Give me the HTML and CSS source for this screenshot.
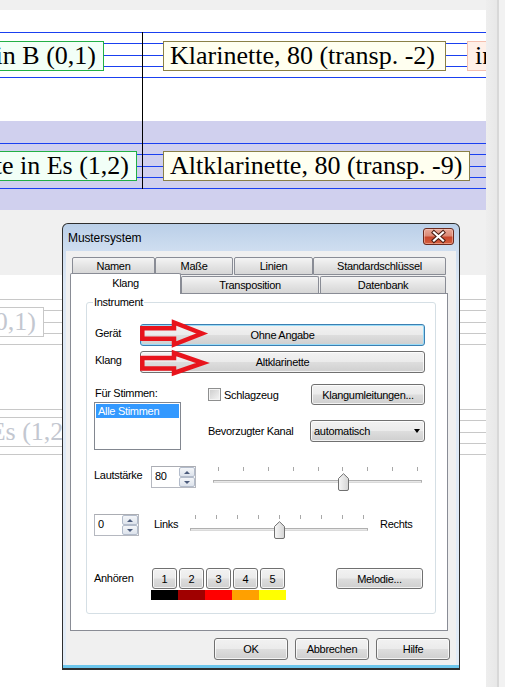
FILE: index.html
```
<!DOCTYPE html>
<html lang="de">
<head>
<meta charset="utf-8">
<title>Mustersystem</title>
<link rel="stylesheet" href="styles.css">
</head>
<body>
<div class="screen">
  <div class="main">
    <div class="topband"></div>
    <div class="score">
      <div class="area a1">
        <div class="staff first">
          <div class="nbox green r b1"><span>Klarinette in B (0,1)</span></div>
          <div class="nbox olive b2">Klarinette, 80 (transp. -2)</div>
          <div class="nbox pink b3">in</div>
        </div>
      </div>
      <div class="area a2">
        <div class="staff">
          <div class="nbox green r b4"><span>Altklarinette in Es (1,2)</span></div>
          <div class="nbox olive b5">Altklarinette, 80 (transp. -9)</div>
        </div>
      </div>
      <div class="area a3"></div>
      <div class="area a4">
        <div class="staff faded">
          <div class="nbox fbox r b6"><span>Klarinette in B (0,1)</span></div>
        </div>
        <div class="staff faded s4">
          <div class="nbox fbox r b7"><span>Altklarinette in Es (1,2)</span></div>
        </div>
      </div>
      <div class="barline"></div>
    </div>
  </div>
  <div class="scrollbar"></div>
</div>

<div class="dialog">
  <div class="titlebar">
    <span class="title">Mustersystem</span>
    <div class="close">
      <svg width="29" height="15" viewBox="0 0 29 15">
        <path d="M10 3.5L19 11.5M19 3.5L10 11.5" stroke="#4a1d14" stroke-width="4.2" stroke-linecap="square"/>
        <path d="M10 3.5L19 11.5M19 3.5L10 11.5" stroke="#ffffff" stroke-width="2.2" stroke-linecap="square"/>
      </svg>
    </div>
  </div>
  <div class="dbody">
    <div class="tabs-back">
      <div class="tab t-namen">Namen</div>
      <div class="tab t-masse">Maße</div>
      <div class="tab t-linien">Linien</div>
      <div class="tab t-std">Standardschlüssel</div>
    </div>
    <div class="tabs-front">
      <div class="tab active t-klang">Klang</div>
      <div class="tab t-trans">Transposition</div>
      <div class="tab t-daten">Datenbank</div>
    </div>
    <div class="panel">
      <div class="group">
        <div class="legend">Instrument</div>

        <div class="row r-geraet">
          <span class="lbl lbl-w">Gerät</span>
          <div class="btn focus grow">Ohne Angabe</div>
        </div>
        <div class="row r-klang">
          <span class="lbl lbl-w">Klang</span>
          <div class="btn grow">Altklarinette</div>
        </div>

        <div class="section">
          <div class="col-left">
            <div class="lbl2">Für Stimmen:</div>
            <div class="listbox"><div class="item sel">Alle Stimmen</div></div>
          </div>
          <div class="col-right">
            <div class="rowA">
              <span class="check"></span>
              <span class="chk-label">Schlagzeug</span>
              <div class="btn b-umleit">Klangumleitungen...</div>
            </div>
            <div class="rowB">
              <span>Bevorzugter Kanal</span>
              <div class="btn select">automatisch<span class="caret"></span></div>
            </div>
          </div>
        </div>

        <div class="row r-vol">
          <span class="lbl lbl-vol">Lautstärke</span>
          <div class="spin">
            <span class="val">80</span>
            <div class="spinbtns"><span class="sb up"></span><span class="sb down"></span></div>
          </div>
          <div class="slider s-vol">
            <div class="ticks"><i></i><i></i><i></i><i></i><i></i><i></i><i></i><i></i><i></i></div>
            <div class="track"></div>
            <svg class="thumb" style="left:125px" width="11" height="18" viewBox="0 0 11 18">
              <defs><linearGradient id="tg1" x1="0" x2="1" y1="0" y2="0"><stop offset="0" stop-color="#f7f7f7"/><stop offset="1" stop-color="#d4d4d4"/></linearGradient></defs>
              <path d="M0.5 16V5.5L5.5 0.7L10.5 5.5V16Q10.5 17.5 9 17.5H2Q0.5 17.5 0.5 16Z" fill="url(#tg1)" stroke="#707070"/>
            </svg>
          </div>
        </div>

        <div class="row r-pan">
          <div class="spin">
            <span class="val">0</span>
            <div class="spinbtns"><span class="sb up"></span><span class="sb down"></span></div>
          </div>
          <span class="lbl lbl-links">Links</span>
          <div class="slider s-pan">
            <div class="ticks"><i></i><i></i><i></i><i></i><i></i><i></i><i></i><i></i><i></i></div>
            <div class="track"></div>
            <svg class="thumb" style="left:84px" width="11" height="18" viewBox="0 0 11 18">
              <defs><linearGradient id="tg2" x1="0" x2="1" y1="0" y2="0"><stop offset="0" stop-color="#f7f7f7"/><stop offset="1" stop-color="#d4d4d4"/></linearGradient></defs>
              <path d="M0.5 16V5.5L5.5 0.7L10.5 5.5V16Q10.5 17.5 9 17.5H2Q0.5 17.5 0.5 16Z" fill="url(#tg2)" stroke="#707070"/>
            </svg>
          </div>
          <span class="lbl lbl-rechts">Rechts</span>
        </div>

        <div class="row r-hear">
          <span class="lbl lbl-vol lbl-hear">Anhören</span>
          <div class="numbers">
            <div class="numbtns">
              <div class="btn nb">1</div>
              <div class="btn nb">2</div>
              <div class="btn nb">3</div>
              <div class="btn nb">4</div>
              <div class="btn nb">5</div>
            </div>
            <div class="bars">
              <span class="bar c1"></span><span class="bar c2"></span><span class="bar c3"></span><span class="bar c4"></span><span class="bar c5"></span>
            </div>
          </div>
          <div class="btn b-melodie">Melodie...</div>
        </div>

        <svg class="arrows" width="80" height="64" viewBox="0 0 80 64">
          <polygon points="6.3,12.3 38,12.3 38,6.5 66,17.5 38,28.5 38,22.7 6.3,22.7" fill="none" stroke="#e8141c" stroke-width="4.5"/>
          <polygon points="6.3,42 38,42 38,37 67,47 38,57 38,52.5 6.3,52.5" fill="none" stroke="#e8141c" stroke-width="4.5"/>
        </svg>
      </div>
    </div>
    <div class="dlg-buttons">
      <div class="btn dbtn">OK</div>
      <div class="btn dbtn">Abbrechen</div>
      <div class="btn dbtn">Hilfe</div>
    </div>
  </div>
</div>
</body>
</html>
```
FILE: styles.css
```
body {
  margin: 0;
  font-family: "Liberation Sans", Arial, sans-serif;
}

.screen {
  display: flex;
  height: 687px;
  overflow: hidden;
  background: #f0f0f0;
}

.main {
  width: 486px;
  flex: none;
  display: flex;
  flex-direction: column;
  overflow: hidden;
}

.topband {
  height: 10px;
  flex: none;
  background: #f0f0f0;
}

.score {
  position: relative;
  flex: 1;
  display: flex;
  flex-direction: column;
}

.area {
  flex: none;
  box-sizing: border-box;
}

.a1 { height: 111px; padding-top: 22px; background: #ffffff; }
.a2 { height: 89px; padding-top: 22px; background: #d0d0ee; }
.a3 { height: 65px; background: #f0f0f0; }
.a4 { flex: 1; padding-top: 24px; background: #ffffff; }

.staff {
  --lc: #1a40f0;
  height: 46px;
  box-sizing: border-box;
  padding-top: 8px;
  display: flex;
  align-items: flex-start;
  background:
    linear-gradient(var(--lc), var(--lc)) 0 0 / 100% 1px no-repeat,
    linear-gradient(var(--lc), var(--lc)) 0 11px / 100% 1px no-repeat,
    linear-gradient(var(--lc), var(--lc)) 0 23px / 100% 1px no-repeat,
    linear-gradient(var(--lc), var(--lc)) 0 34px / 100% 1px no-repeat,
    linear-gradient(var(--lc), var(--lc)) 0 45px / 100% 1px no-repeat;
}
.staff.first { padding-top: 9px; }
.staff.faded { --lc: #c8c8c8; }
.staff.s4 { margin-top: 64px; }

.nbox {
  flex: none;
  box-sizing: border-box;
  height: 30px;
  border: 1px solid;
  font-family: "Liberation Serif", "Times New Roman", serif;
  font-size: 26px;
  line-height: 27px;
  white-space: nowrap;
  overflow: hidden;
  color: #000;
}
.nbox.r {
  display: flex;
  justify-content: flex-end;
}
.nbox.r span { flex: none; }

.green { border-color: #22b045; background: #f2fff7; }
.olive { border-color: #8a8046; background: #fffff0; }
.pink { border-color: #f4c0b0; background: #fff0e8; }
.fbox { border-color: #c8c8c8; background: #ffffff; color: #c3c7d0; }

.b1 { margin-left: -60px; width: 164px; padding-right: 7px; }
.b2 { margin-left: 59px; width: 283px; padding-left: 6px; }
.b3 { margin-left: 21px; width: 40px; padding-left: 7px; }
.b4 { margin-left: -60px; width: 197px; padding-right: 7px; }
.b5 { margin-left: 26px; width: 307px; padding-left: 6px; }
.b6 { margin-left: -60px; width: 104px; padding-right: 7px; }
.b7 { margin-left: -60px; width: 140px; padding-right: 7px; }

.barline {
  position: absolute;
  left: 142px;
  top: 22px;
  width: 1px;
  height: 157px;
  background: #000;
}

.scrollbar {
  flex: 1;
  background: linear-gradient(to right, #eeeeee 0, #e8e8e8 11px, #d8d8d8 11px, #d8d8d8 13px, #f2f2f2 13px);
}

/* ---------- dialog ---------- */
.dialog {
  position: absolute;
  left: 62px;
  top: 223px;
  width: 398px;
  height: 447px;
  box-sizing: border-box;
  border: 1px solid #2e2e2e;
  border-bottom-width: 2px;
  border-radius: 6px 6px 0 0;
  background: linear-gradient(#bacfe8 0, #cfdef0 27px, #dde8f5 60px, #e2ecf7 calc(100% - 3px), #6cc6ec calc(100% - 3px));
  display: flex;
  flex-direction: column;
  font-size: 11px;
  letter-spacing: -0.3px;
  color: #000;
}

.titlebar {
  height: 27px;
  flex: none;
  display: flex;
  align-items: center;
  padding-left: 5px;
}
.title {
  font-size: 12px;
  letter-spacing: -0.1px;
}
.close {
  margin-left: auto;
  margin-right: 5px;
  align-self: flex-start;
  margin-top: 4px;
  width: 31px;
  height: 17px;
  box-sizing: border-box;
  border: 1px solid #6b2a1e;
  border-radius: 3px;
  background: linear-gradient(#e9a898 0%, #dc8a76 45%, #c8462c 55%, #d45f3e 100%);
  box-shadow: inset 0 0 0 1px rgba(255, 220, 210, 0.45);
  display: flex;
}

.dbody {
  flex: 1;
  margin: 0 3px 3px;
  background: #f0f0f0;
  padding: 6px 8px 0 4px;
  display: flex;
  flex-direction: column;
}

.tabs-back {
  display: flex;
  margin-left: 2px;
}
.tabs-front {
  display: flex;
  align-items: flex-start;
  margin-top: 1px;
}

.tab {
  flex: none;
  box-sizing: border-box;
  border: 1px solid #898c95;
  border-radius: 2px 2px 0 0;
  background: linear-gradient(#f4f4f4, #e4e4e4 50%, #d6d6d6);
  display: flex;
  align-items: center;
  justify-content: center;
  white-space: nowrap;
}
.tabs-back .tab { height: 18px; }
.tabs-front .tab { height: 17px; border-bottom: none; }
.tabs-front .tab.active {
  height: 21px;
  margin-top: -3px;
  padding-bottom: 2px;
  background: #ffffff;
  position: relative;
  z-index: 2;
}

.t-namen { width: 83px; }
.t-masse { width: 78px; }
.t-linien { width: 79px; margin-left: 1px; }
.t-std { width: 133px; }
.t-klang { width: 111px; }
.t-trans { width: 138px; }
.t-daten { width: 126px; margin-left: 1px; }

.panel {
  margin-top: -1px;
  height: 338px;
  flex: none;
  box-sizing: border-box;
  border: 1px solid #898c95;
  background: #ffffff;
  padding: 8px 11px 0 15px;
}

.group {
  position: relative;
  height: 312px;
  box-sizing: border-box;
  border: 1px solid #d5dfe5;
  border-radius: 3px;
  padding: 0 10px 0 7px;
}

.legend {
  width: fit-content;
  height: 13px;
  line-height: 13px;
  margin: -7px 0 0 -1px;
  padding: 0 1px;
  background: #ffffff;
}

.row {
  display: flex;
  align-items: flex-start;
}

.lbl { flex: none; white-space: nowrap; }
.lbl-w {
  width: 46px;
  box-sizing: border-box;
  padding-left: 1px;
  padding-top: 3px;
  line-height: 13px;
}

.r-geraet { margin-top: 15px; height: 22px; }
.r-klang { margin-top: 5px; height: 22px; }

.btn {
  box-sizing: border-box;
  height: 22px;
  border: 1px solid #707070;
  border-radius: 3px;
  background: linear-gradient(#f2f2f2 0%, #ebebeb 48%, #dddddd 52%, #cfcfcf 100%);
  box-shadow: inset 0 0 0 1px rgba(255, 255, 255, 0.75);
  display: flex;
  align-items: center;
  justify-content: center;
  white-space: nowrap;
  flex: none;
}
.btn.grow { flex: 1; }
.btn.focus {
  border-color: #3c7fb1;
  box-shadow: inset 0 0 0 1px #9adcf8;
}

.section {
  display: flex;
  margin-top: 11px;
}
.col-left {
  width: 87px;
  flex: none;
}
.lbl2 {
  margin-top: 3px;
  height: 13px;
  line-height: 13px;
  padding-left: 1px;
  white-space: nowrap;
}
.listbox {
  margin-top: 2px;
  height: 48px;
  box-sizing: border-box;
  border: 1px solid #828790;
  background: #ffffff;
  padding: 1px;
}
.item {
  height: 14px;
  line-height: 14px;
  padding-left: 2px;
  white-space: nowrap;
}
.item.sel { background: #3399ff; color: #ffffff; }

.col-right {
  flex: 1;
  margin-left: 27px;
}
.rowA {
  height: 21px;
  display: flex;
  align-items: center;
}
.check {
  width: 13px;
  height: 13px;
  box-sizing: border-box;
  border: 1px solid #8e8f8f;
  background: linear-gradient(135deg, #cbcbcb, #f6f6f6);
  box-shadow: inset 0 0 0 1px #f4f4f4;
  flex: none;
}
.chk-label { margin-left: 3px; }
.b-umleit {
  margin-left: auto;
  width: 114px;
  height: 21px;
}
.rowB {
  margin-top: 15px;
  height: 22px;
  display: flex;
  align-items: center;
}
.select {
  margin-left: auto;
  width: 115px;
  justify-content: flex-start;
  padding-left: 3px;
}
.caret {
  width: 0;
  height: 0;
  border-left: 3.5px solid transparent;
  border-right: 3.5px solid transparent;
  border-top: 4px solid #000;
  margin-left: auto;
  margin-right: 4px;
}

.r-vol { margin-top: 16px; height: 25px; }
.lbl-vol { width: 57px; line-height: 19px; }

.spin {
  width: 45px;
  height: 22px;
  box-sizing: border-box;
  border: 1px solid #b5b8c0;
  border-top-color: #abadb3;
  background: #ffffff;
  display: flex;
  flex: none;
}
.val {
  flex: 1;
  padding-left: 3px;
  line-height: 19px;
}
.spinbtns {
  width: 16px;
  display: flex;
  flex-direction: column;
}
.sb {
  flex: 1;
  box-sizing: border-box;
  border: 1px solid #b3bccb;
  border-radius: 2px;
  background: linear-gradient(#f4f6f9, #dde3ec);
  display: flex;
  align-items: center;
  justify-content: center;
}
.sb.up::after {
  content: "";
  border-left: 3px solid transparent;
  border-right: 3px solid transparent;
  border-bottom: 3px solid #4b5b7c;
}
.sb.down::after {
  content: "";
  border-left: 3px solid transparent;
  border-right: 3px solid transparent;
  border-top: 3px solid #4b5b7c;
}

.slider {
  position: relative;
  height: 25px;
  flex: none;
}
.s-vol { width: 209px; margin-left: 17px; }
.s-pan { width: 178px; }
.ticks {
  display: flex;
  justify-content: space-between;
  padding: 1px 4px 0 5px;
  height: 4px;
}
.ticks i {
  width: 1px;
  height: 4px;
  background: #a8a8a8;
}
.track {
  margin-top: 9px;
  height: 3px;
  box-sizing: border-box;
  border: 1px solid #b0b0b0;
  border-bottom-color: #dadada;
  background: #e8e8e8;
}
.thumb {
  position: absolute;
  top: 7px;
}

.r-pan { margin-top: 23px; height: 25px; }
.lbl-links {
  width: 36px;
  margin-left: 15px;
  line-height: 21px;
}
.lbl-rechts {
  margin-left: 12px;
  line-height: 21px;
}

.r-hear { margin-top: 29px; }
.lbl-hear { line-height: 21px; }
.numbers { flex: none; }
.numbtns { display: flex; }
.btn.nb {
  width: 25px;
  height: 21px;
  margin: 0 1px;
}
.bars {
  display: flex;
  margin-top: 1px;
}
.bar { width: 27px; height: 10px; }
.c1 { background: #000000; }
.c2 { background: #a00000; }
.c3 { background: #ff0000; }
.c4 { background: #ffa000; }
.c5 { background: #ffff00; }
.b-melodie {
  margin-left: auto;
  margin-right: 2px;
  width: 87px;
  height: 21px;
}

.arrows {
  position: absolute;
  left: 49px;
  top: 13px;
}

.dlg-buttons {
  margin-top: 7px;
  margin-right: -2px;
  display: flex;
  justify-content: flex-end;
  gap: 7px;
}
.btn.dbtn { width: 74px; }
```
